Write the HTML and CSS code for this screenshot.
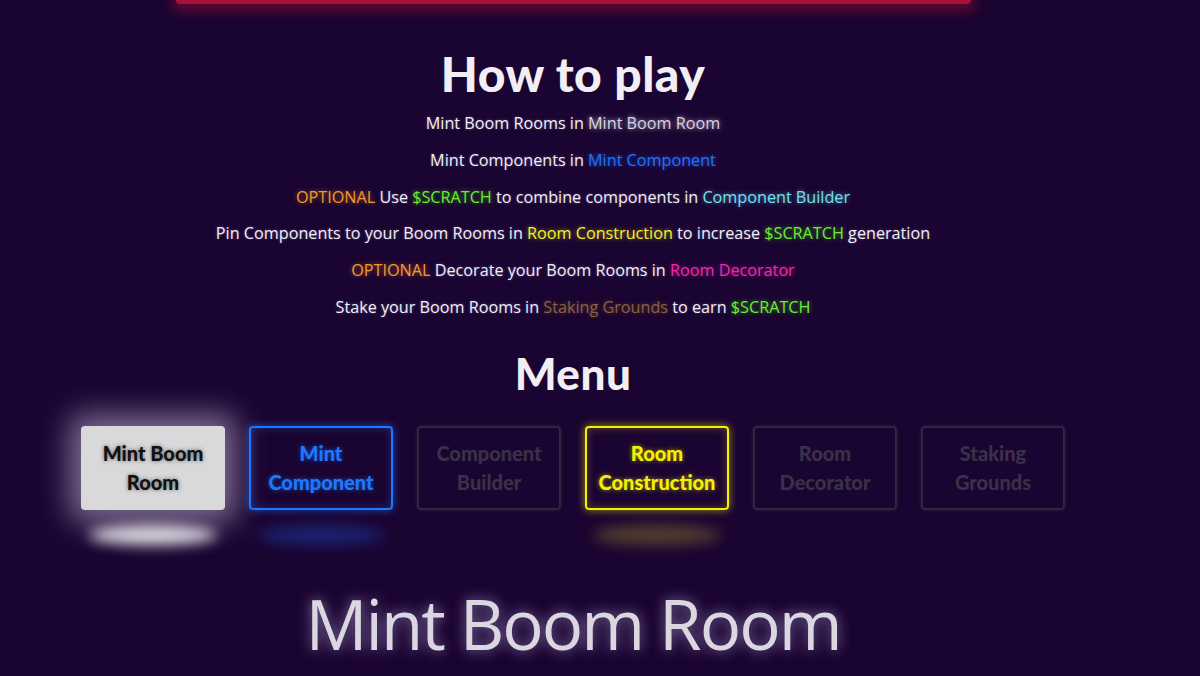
FILE: index.html
```html
<!DOCTYPE html>
<html lang="en">
<head>
<meta charset="utf-8">
<title>Boom Rooms</title>
<link rel="stylesheet" href="styles.css">
</head>
<body>
<div class="page">
  <div class="topbar"></div>

  <section class="howto">
    <h1 class="heading">How to play</h1>
    <ul class="steps">
      <li>Mint Boom Rooms in <span class="hl hl-white">Mint Boom Room</span></li>
      <li>Mint Components in <span class="hl hl-blue">Mint Component</span></li>
      <li><span class="hl hl-orange">OPTIONAL</span> Use <span class="hl hl-green">$SCRATCH</span> to combine components in <span class="hl hl-cyan">Component Builder</span></li>
      <li>Pin Components to your Boom Rooms in <span class="hl hl-yellow">Room Construction</span> to increase <span class="hl hl-green">$SCRATCH</span> generation</li>
      <li><span class="hl hl-orange">OPTIONAL</span> Decorate your Boom Rooms in <span class="hl hl-pink">Room Decorator</span></li>
      <li>Stake your Boom Rooms in <span class="hl hl-brown">Staking Grounds</span> to earn <span class="hl hl-green">$SCRATCH</span></li>
    </ul>
  </section>

  <section class="menu">
    <h2 class="heading menu-title">Menu</h2>
    <nav class="menu-row">
      <button class="tile tile-active">Mint Boom Room</button>
      <button class="tile tile-blue">Mint Component</button>
      <button class="tile tile-off">Component Builder</button>
      <button class="tile tile-yellow">Room Construction</button>
      <button class="tile tile-off">Room Decorator</button>
      <button class="tile tile-off">Staking Grounds</button>
    </nav>
  </section>

  <h2 class="section-title">Mint Boom Room</h2>
</div>
</body>
</html>
```

FILE: styles.css
```css
html, body {
  margin: 0;
  padding: 0;
}

body {
  background: #1a0431;
  color: #f2eef6;
  font-family: "Open Sans", "Noto Sans", sans-serif;
  overflow: hidden;
  height: 676px;
}

.page {
  width: 1146px;
  display: flex;
  flex-direction: column;
  align-items: center;
}

/* glowing edge of the banner above */
.topbar {
  width: 795px;
  height: 4px;
  background: #a8103a;
  border-radius: 0 0 6px 6px;
  box-shadow: 0 2px 12px 5px rgba(170, 15, 50, 0.5);
}

.heading {
  font-family: "Lato", "Noto Sans", sans-serif;
  font-weight: 900;
  color: #f1eef4;
  margin: 0;
  letter-spacing: 0.5px;
}

.howto {
  display: flex;
  flex-direction: column;
  align-items: center;
}

.howto .heading {
  font-size: 48px;
  line-height: 60px;
  margin-top: 40px;
}

.steps {
  list-style: none;
  margin: 0;
  padding: 1px 0 0;
  display: flex;
  flex-direction: column;
  align-items: center;
}

.steps li {
  font-size: 16.2px;
  line-height: 36.8px;
  text-shadow: 0 0 3px rgba(200, 200, 255, 0.35);
}

.hl-white  { color: #d9d3e2; text-shadow: 0 0 5px rgba(255, 255, 255, 0.7); }
.hl-blue   { color: #1f74ff; text-shadow: 0 0 5px rgba(30, 110, 255, 0.7); }
.hl-orange { color: #f39a2e; text-shadow: 0 0 5px rgba(245, 140, 30, 0.6); }
.hl-green  { color: #66f02c; text-shadow: 0 0 5px rgba(100, 240, 40, 0.6); }
.hl-cyan   { color: #72e0f2; text-shadow: 0 0 5px rgba(110, 220, 240, 0.6); }
.hl-yellow { color: #f6f22a; text-shadow: 0 0 5px rgba(245, 240, 40, 0.6); }
.hl-pink   { color: #f02aae; text-shadow: 0 0 5px rgba(240, 40, 170, 0.6); }
.hl-brown  { color: #8d623f; text-shadow: 0 0 5px rgba(140, 95, 60, 0.6); }

.menu {
  display: flex;
  flex-direction: column;
  align-items: center;
  margin-top: 22px;
}

.menu-title {
  font-size: 44px;
  line-height: 50px;
}

.menu-row {
  display: flex;
  gap: 24px;
  margin-top: 28px;
}

.tile {
  position: relative;
  width: 144px;
  height: 84px;
  box-sizing: border-box;
  border-radius: 4px;
  background: transparent;
  border: 2px solid #2f2740;
  font-family: "Lato", "Noto Sans", sans-serif;
  font-weight: 900;
  font-size: 20px;
  line-height: 29px;
  padding: 0 4px;
  color: #3a3047;
  cursor: pointer;
}

/* floor reflection under lit tiles */
.tile::after {
  content: "";
  position: absolute;
  left: 6px;
  right: 6px;
  top: 97px;
  height: 20px;
  border-radius: 50%;
  filter: blur(7px);
  opacity: 0;
}

.tile-active {
  background: #d9d8db;
  border-color: #d9d8db;
  color: #111;
  text-shadow: 0 0 4px rgba(0, 0, 0, 0.55);
  box-shadow: 0 0 30px 12px rgba(225, 210, 240, 0.5);
}
.tile-active::after {
  background: #f0eef2;
  opacity: 0.9;
}

.tile-blue {
  border-color: #1b78ff;
  color: #1b78ff;
  text-shadow: 0 0 5px rgba(30, 120, 255, 0.6);
  box-shadow: 0 0 8px rgba(30, 120, 255, 0.6), inset 0 0 8px rgba(30, 120, 255, 0.35);
}
.tile-blue::after {
  background: #1b4fd0;
  opacity: 0.4;
}

.tile-yellow {
  border-color: #f4f100;
  color: #f4f100;
  text-shadow: 0 0 5px rgba(245, 240, 0, 0.6);
  box-shadow: 0 0 8px rgba(245, 240, 0, 0.6), inset 0 0 8px rgba(245, 240, 0, 0.3);
}
.tile-yellow::after {
  background: #8a7a2c;
  opacity: 0.5;
}

.tile-off {
  box-shadow: 0 0 4px rgba(70, 60, 90, 0.4);
}

.section-title {
  font-family: "Open Sans", "Noto Sans", sans-serif;
  font-weight: 400;
  font-size: 69px;
  line-height: 1;
  letter-spacing: -2px;
  margin: 79px 0 0;
  color: #dad7e0;
  text-shadow: 0 0 14px rgba(220, 200, 255, 0.6);
}
```
